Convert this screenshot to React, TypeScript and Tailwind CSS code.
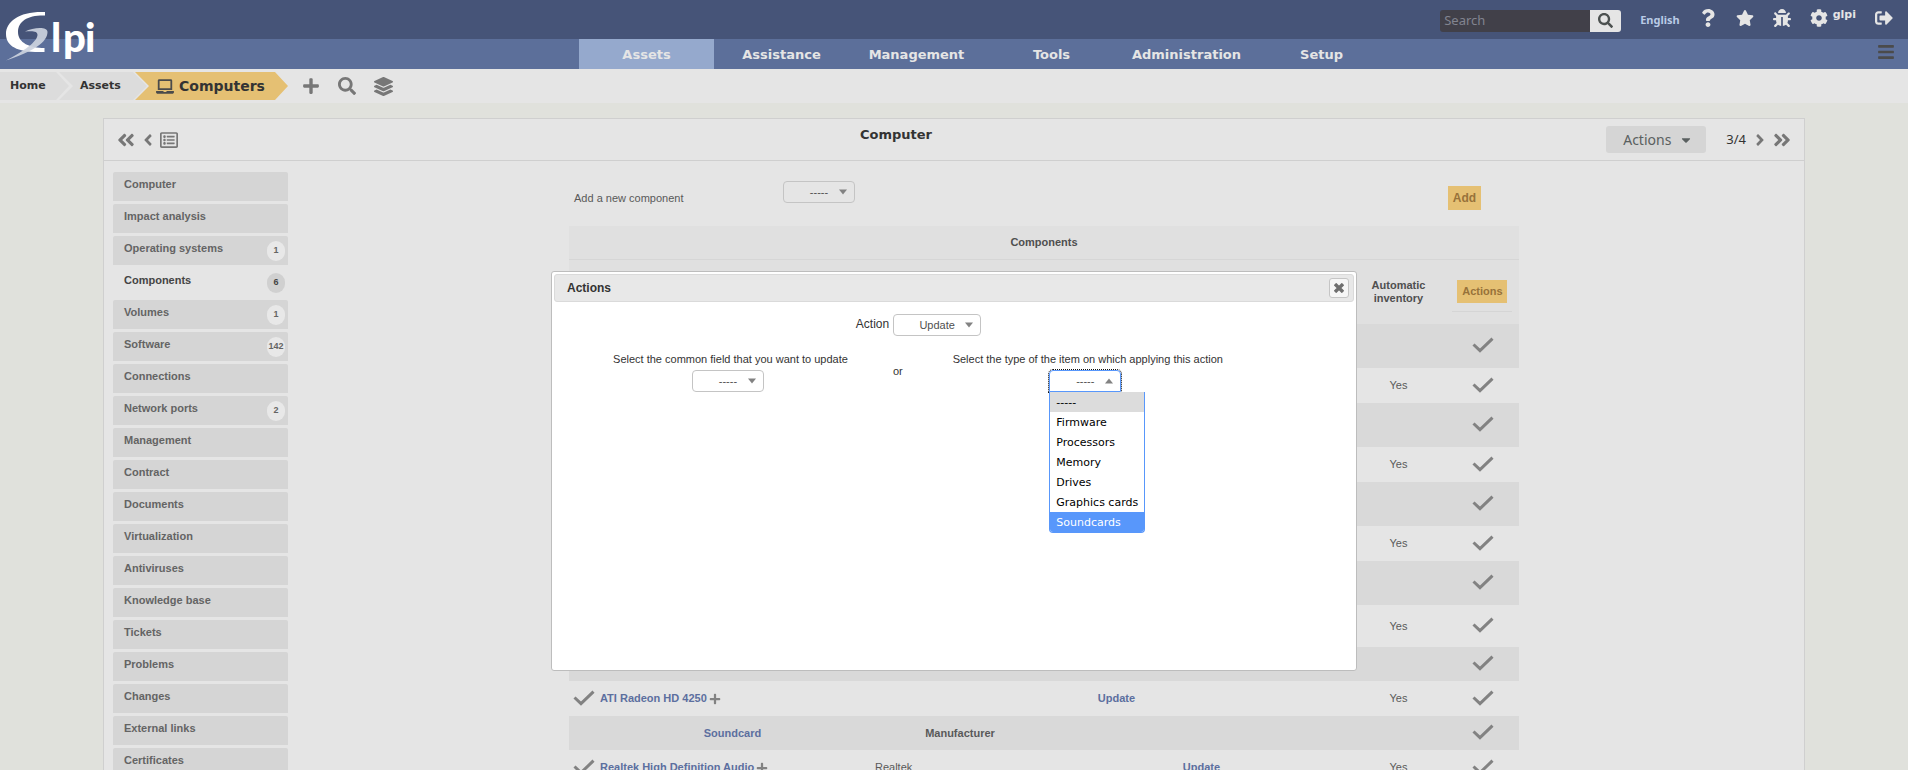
import type { ReactNode } from "react";
import {
  FaAngleDoubleLeft,
  FaAngleDoubleRight,
  FaAngleLeft,
  FaAngleRight,
  FaBars,
  FaBug,
  FaCaretDown,
  FaCog,
  FaLaptop,
  FaLayerGroup,
  FaPlus,
  FaQuestion,
  FaRegListAlt,
  FaSearch,
  FaSignOutAlt,
  FaStar,
} from "react-icons/fa";

const menu = ["Assets", "Assistance", "Management", "Tools", "Administration", "Setup"];

const tabs: { label: string; count?: number; active?: boolean }[] = [
  { label: "Computer" },
  { label: "Impact analysis" },
  { label: "Operating systems", count: 1 },
  { label: "Components", count: 6, active: true },
  { label: "Volumes", count: 1 },
  { label: "Software", count: 142 },
  { label: "Connections" },
  { label: "Network ports", count: 2 },
  { label: "Management" },
  { label: "Contract" },
  { label: "Documents" },
  { label: "Virtualization" },
  { label: "Antiviruses" },
  { label: "Knowledge base" },
  { label: "Tickets" },
  { label: "Problems" },
  { label: "Changes" },
  { label: "External links" },
  { label: "Certificates" },
];

const itemTypes = ["-----", "Firmware", "Processors", "Memory", "Drives", "Graphics cards", "Soundcards"];

function Logo() {
  return (
    <svg viewBox="0 0 100 69" className="h-[69px] w-[100px]" role="img" aria-label="GLPI">
      <path
        d="M45 12 C20 11 6 21 6 34 C6 47 19 53 44.500 52 L44.500 48 C30 48 18 43 18 32 C18 21 28 15 45 15.500 Z"
        fill="#fff"
      />
      <path
        d="M25 31.500 C33 27.500 47.500 26 47.500 32 C47.500 42 34 51 6 60.500 C24 51 37 42 37.500 35 C37.500 31 33 31 25 31.500 Z"
        fill="#ccd2de"
        fillOpacity="0.92"
      />
      <text x="51 63 85" y="52" fontFamily="Lato, sans-serif" fontWeight="900" fontSize="40" fill="#fff">
        lpi
      </text>
    </svg>
  );
}

function Check() {
  return (
    <svg viewBox="0 0 22 16" className="block h-4 w-[22px]" aria-hidden="true">
      <path d="M1.500 7.500 L8 13.700 L20.500 1.700" fill="none" stroke="#828282" strokeWidth="3" />
    </svg>
  );
}

function Dropdown({
  label,
  value,
  wide,
  open,
}: {
  label: string;
  value: string;
  wide?: boolean;
  open?: boolean;
}) {
  return (
    <span className="relative inline-flex">
      <select
        aria-label={label}
        defaultValue={value}
        className={`h-[22px] appearance-none border bg-transparent text-center text-[11px] leading-[20px] text-[#505050] ${
          wide ? "w-[88px]" : "w-[72px]"
        } ${
          open
            ? "rounded-t-[4px] border-[#5897fb] outline-1 outline-dotted outline-[#111]"
            : "rounded-[4px] border-[#c4c4c4]"
        }`}
      >
        <option>{value}</option>
      </select>
      <svg
        viewBox="0 0 8 6"
        className={`pointer-events-none absolute top-2 right-2 h-[6px] w-2 ${open ? "rotate-180" : ""}`}
        aria-hidden="true"
      >
        <path d="M0 0.500H8L4 5.500Z" fill="#828282" />
      </svg>
      {open && (
        <ul
          role="listbox"
          aria-label={label}
          className="absolute top-[22px] left-0 z-20 w-24 overflow-hidden rounded-b-[4px] border border-t-0 border-[#5897fb] bg-white text-left font-['DejaVu_Sans',sans-serif] text-[11px] leading-[22px] whitespace-nowrap text-black"
        >
          {itemTypes.map((t) => (
            <li
              key={t}
              role="option"
              aria-selected={t === value}
              className={`h-5 px-[6px] ${t === value ? "bg-[#dcdcdc]" : ""} ${
                t === "Soundcards" ? "bg-[#5897fb] text-white" : ""
              }`}
            >
              {t}
            </li>
          ))}
        </ul>
      )}
    </span>
  );
}

function ActionCell() {
  return (
    <td className="pb-[2px] pl-[6px]">
      <span className="flex justify-center">
        <Check />
      </span>
    </td>
  );
}

function GroupRow({ height, children }: { height: string; children?: ReactNode }) {
  return (
    <tr className={`bg-[#d9d9d9] ${height}`}>
      {children ?? <td colSpan={5} />}
      <ActionCell />
    </tr>
  );
}

function ItemRow({ height, children }: { height: string; children?: ReactNode }) {
  return (
    <tr className={height}>
      {children ?? <td colSpan={4} />}
      <td className="text-center">Yes</td>
      <ActionCell />
    </tr>
  );
}

function ItemName({ name }: { name: string }) {
  return (
    <>
      <td className="pb-[2px] pl-1">
        <Check />
      </td>
      <td>
        <a href="#item" className="flex items-center gap-[2px] pl-[7px] font-bold text-[#5c6f9f]">
          {name}
          <FaPlus className="size-[12px] text-[#828282]" />
        </a>
      </td>
    </>
  );
}

export default function App() {
  return (
    <div className="relative h-screen overflow-hidden bg-[#e0e1dc] font-['Liberation_Sans',sans-serif] text-[11px] text-[#595959]">
      <header className="relative">
        <div className="flex h-[39px] items-center justify-end gap-[19px] bg-[#465478] pr-[15px] text-[#e5e5e5]">
          <form className="mt-[2px] flex h-[22px]">
            <input
              type="text"
              aria-label="Search"
              placeholder="Search"
              className="w-[150px] rounded-l-[3px] bg-[#414049] px-1 font-['Noto_Sans',sans-serif] text-[13px] placeholder:text-[#828490]"
            />
            <button
              type="button"
              aria-label="Run search"
              className="flex w-[31px] items-center justify-center rounded-r-[3px] bg-[#e5e5e5] text-[#4c5150]"
            >
              <FaSearch className="size-[15px]" />
            </button>
          </form>
          <a href="#lang" className="pt-px font-['Noto_Sans',sans-serif] font-bold text-[#b9cbe6]">
            English
          </a>
          <a href="#help" aria-label="Help" className="pb-1">
            <FaQuestion className="size-[18px]" />
          </a>
          <a href="#bookmarks" aria-label="Bookmarks" className="pb-1">
            <FaStar className="size-[18px]" />
          </a>
          <a href="#debug" aria-label="Debug" className="pb-1">
            <FaBug className="size-[18px]" />
          </a>
          <a href="#settings" className="flex items-center gap-[5px] pb-1 font-['DejaVu_Sans',sans-serif] font-bold">
            <FaCog className="size-[18px]" />
            <span className="pb-1">glpi</span>
          </a>
          <a href="#logout" aria-label="Log out" className="pb-1">
            <FaSignOutAlt className="size-[18px]" />
          </a>
        </div>
        <nav className="relative flex h-[30px] justify-center bg-[#5c6f9a] pl-[60px] font-['DejaVu_Sans',sans-serif] text-[13px] font-bold text-[#e5e5e5]">
          {menu.map((m) => (
            <a
              key={m}
              href={`#${m}`}
              className={`flex w-[135px] items-center justify-center pt-[2px] ${m === "Assets" ? "bg-[#95a9cd]" : ""}`}
            >
              {m}
            </a>
          ))}
          <button type="button" aria-label="Menu" className="absolute top-1 right-[13px] text-[#4b4b4b]">
            <FaBars className="size-[18px]" />
          </button>
        </nav>
        <a href="#home" className="absolute top-0 left-0">
          <Logo />
        </a>
      </header>

      <div className="flex h-[34px] items-center bg-[#e5e5e5] font-['DejaVu_Sans',sans-serif] font-bold text-[#333]">
        <a
          href="#home"
          className="flex h-7 w-[69px] items-center bg-[#dcdcdc] pl-[10px] [clip-path:polygon(0_0,56px_0,100%_50%,56px_100%,0_100%)]"
        >
          Home
        </a>
        <a
          href="#assets"
          className="-ml-[10px] flex h-7 w-[88px] items-center bg-[#dcdcdc] pl-[21px] [clip-path:polygon(0_0,74px_0,100%_50%,74px_100%,0_100%,14px_50%)]"
        >
          Assets
        </a>
        <a
          href="#computers"
          className="-ml-3 flex h-7 w-[153px] items-center gap-[5px] bg-[#e5c073] pl-[21px] text-[14px] [clip-path:polygon(0_0,140px_0,100%_50%,140px_100%,0_100%,14px_50%)]"
        >
          <FaLaptop className="h-[17px] w-[18px] text-[#4b4b4b]" />
          Computers
        </a>
        <div className="flex items-center gap-[18px] pl-[14px] text-[#777]">
          <button type="button" aria-label="Add">
            <FaPlus className="size-[18px]" />
          </button>
          <button type="button" aria-label="Search computers">
            <FaSearch className="size-[18px]" />
          </button>
          <button type="button" aria-label="Templates">
            <FaLayerGroup className="size-[19px]" />
          </button>
        </div>
      </div>

      <main className="mx-[103px] mt-[15px] border border-[#cfcfcf] bg-[#e5e5e5]">
        <div className="flex h-[42px] items-center border-b border-[#cfcfcf] text-[#777]">
          <div className="flex flex-1 items-center gap-[3px] pl-[12px]">
            <a href="#first" aria-label="First">
              <FaAngleDoubleLeft className="size-5" />
            </a>
            <a href="#prev" aria-label="Previous">
              <FaAngleLeft className="size-[18px]" />
            </a>
            <a href="#list" aria-label="List">
              <FaRegListAlt className="size-[18px]" />
            </a>
          </div>
          <h1 className="pr-[116px] pb-[9px] font-['DejaVu_Sans',sans-serif] text-[13px] font-bold text-[#333]">
            Computer
          </h1>
          <div className="flex flex-1 items-center justify-end pr-[12px]">
            <button
              type="button"
              className="mr-[20px] flex h-[27px] w-[100px] items-center justify-center gap-2 rounded-[3px] bg-[#d5d5d5] pl-1 font-['Noto_Sans',sans-serif] text-[14px] text-[#5a6060]"
            >
              Actions
              <FaCaretDown className="size-[14px]" />
            </button>
            <span className="font-['Noto_Sans',sans-serif] text-[13px] text-[#333]">3/4</span>
            <a href="#next" aria-label="Next" className="ml-[5px]">
              <FaAngleRight className="size-[18px]" />
            </a>
            <a href="#last" aria-label="Last" className="ml-[3px]">
              <FaAngleDoubleRight className="size-5" />
            </a>
          </div>
        </div>

        <div className="flex">
          <ul className="ml-[9px] flex w-[175px] shrink-0 flex-col gap-[3px] pt-[11px] font-bold">
            {tabs.map((t) => (
              <li key={t.label}>
                <a
                  href={`#${t.label}`}
                  className={`flex h-[29px] items-center justify-between rounded-t-[2px] pr-[3px] pl-[11px] ${
                    t.active ? "text-[#444]" : "bg-[#d5d5d5] text-[#646464]"
                  }`}
                >
                  <span className="pb-1">{t.label}</span>
                  {t.count !== undefined && (
                    <span
                      className={`flex h-5 min-w-[18px] items-center justify-center rounded-full px-px text-[9px] ${
                        t.active ? "bg-[#d0d0d0]" : "bg-[#e8e8e8]"
                      }`}
                    >
                      {t.count}
                    </span>
                  )}
                </a>
              </li>
            ))}
          </ul>

          <section className="flex flex-1 flex-col items-center pr-1">
            <div className="flex h-[65px] w-[950px] pl-[5px]">
              <span className="w-[209px] pt-[29px]">Add a new component</span>
              <div className="flex-1 pt-5">
                <Dropdown label="Component type" value="-----" />
              </div>
              <button
                type="button"
                className="mt-[25px] mr-[38px] h-6 w-[33px] bg-[#e5c073] text-[12px] font-bold text-[#97723a]"
              >
                Add
              </button>
            </div>
            <table className="w-[950px] table-fixed border-collapse">
              <colgroup>
                <col className="w-[24px]" />
                <col className="w-[279px]" />
                <col className="w-[176px]" />
                <col className="w-[307px]" />
                <col className="w-[87px]" />
                <col className="w-[77px]" />
              </colgroup>
              <thead className="bg-[#e0e0e0] text-[#4f4f4f]">
                <tr className="h-[33px] border-b border-[#d6d6d6]">
                  <th colSpan={6}>Components</th>
                </tr>
                <tr className="h-[65px]">
                  <th colSpan={4} />
                  <th className="leading-[13px]">Automatic inventory</th>
                  <th className="pt-2 pl-1">
                    <div className="mx-auto w-[60px] border-b border-[#d5d5d5] pb-2">
                      <button type="button" className="h-[23px] w-[50px] bg-[#e5c073] font-bold text-[#97723a]">
                        Actions
                      </button>
                    </div>
                  </th>
                </tr>
              </thead>
              <tbody>
                <GroupRow height="h-[44px]" />
                <ItemRow height="h-[35px]" />
                <GroupRow height="h-[44px]" />
                <ItemRow height="h-[35px]" />
                <GroupRow height="h-[44px]" />
                <ItemRow height="h-[35px]" />
                <GroupRow height="h-[44px]" />
                <ItemRow height="h-[42px]" />
                <GroupRow height="h-[34px]" />
                <ItemRow height="h-[35px]">
                  <ItemName name="ATI Radeon HD 4250" />
                  <td colSpan={2} className="pl-[6px] text-center font-bold text-[#5c6f9f]">
                    <a href="#update">Update</a>
                  </td>
                </ItemRow>
                <GroupRow height="h-[34px]">
                  <td />
                  <td className="text-center font-bold text-[#5c6f9f]">
                    <a href="#soundcard">Soundcard</a>
                  </td>
                  <td className="text-center font-bold">Manufacturer</td>
                  <td colSpan={2} />
                </GroupRow>
                <ItemRow height="h-[35px]">
                  <ItemName name="Realtek High Definition Audio" />
                  <td className="pl-[3px]">Realtek</td>
                  <td className="text-center font-bold text-[#5c6f9f]">
                    <a href="#update">Update</a>
                  </td>
                </ItemRow>
              </tbody>
            </table>
          </section>
        </div>
      </main>

      <div
        role="dialog"
        aria-label="Actions"
        className="absolute inset-x-0 top-[271px] z-10 mx-auto h-[400px] w-[806px] rounded-[3px] border border-[#bdbdbd] bg-white p-[2px] text-[#333]"
      >
        <div className="flex h-7 items-center justify-between rounded-[3px] border border-[#dadada] bg-[#e8e8e8] pr-[4px] pl-[12px]">
          <h2 className="text-[12px] font-bold">Actions</h2>
          <button
            type="button"
            aria-label="Close"
            className="flex size-5 items-center justify-center rounded-[3px] border border-[#c5c5c5] bg-[#f6f6f6]"
          >
            <svg viewBox="0 0 10 10" className="size-[10px]" aria-hidden="true">
              <path d="M1 1L9 9M9 1L1 9" stroke="#6f6f6f" strokeWidth="3.400" />
            </svg>
          </button>
        </div>
        <div className="pt-3 pr-[71px]">
          <div className="flex justify-center gap-1">
            <span className="text-[12px] leading-[20px]">Action</span>
            <Dropdown label="Action" value="Update" wide />
          </div>
          <div className="flex items-center justify-center gap-[45px] pt-[15px] pr-[6px]">
            <div className="flex flex-col items-center">
              <span className="pb-[2px] pl-[5px] leading-[17px]">Select the common field that you want to update</span>
              <Dropdown label="Common field" value="-----" />
            </div>
            <span>or</span>
            <div className="flex flex-col items-center">
              <span className="pb-[2px] pl-[5px] leading-[17px]">
                Select the type of the item on which applying this action
              </span>
              <Dropdown label="Item type" value="-----" open />
            </div>
          </div>
        </div>
      </div>
    </div>
  );
}
